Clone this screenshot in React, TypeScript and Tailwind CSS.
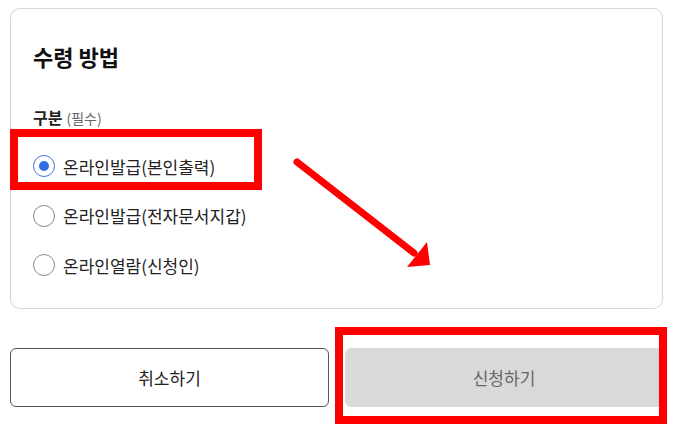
import React from "react";

const font = { fontFamily: '"Noto Sans CJK KR", "Noto Sans", sans-serif' };

function Radio({ checked, label }: { checked?: boolean; label: string }) {
  return (
    <div className="flex items-center h-[26px] gap-[8px]">
      {checked ? (
        <span className="w-[22px] h-[22px] rounded-full border-[1.5px] border-[#3d74db] flex items-center justify-center">
          <span className="w-[10px] h-[10px] rounded-full bg-[#2f6fe0]" />
        </span>
      ) : (
        <span className="w-[22px] h-[22px] rounded-full border-[1.5px] border-[#8a8a8a]" />
      )}
      <span className="text-[17px] text-[#222] leading-none">{label}</span>
    </div>
  );
}

export default function App() {
  return (
    <div className="relative w-[673px] h-[431px] bg-white overflow-hidden" style={font}>
      <div className="pt-[8px] px-[10px]">
        <div className="h-[301px] border border-[#d6d6d6] rounded-[10px] pl-[22px] pt-[32px]">
          <div className="text-[22px] font-bold text-[#111] leading-[30px]">수령 방법</div>
          <div className="mt-[35px] flex items-baseline gap-[4px] leading-[22px]">
            <span className="text-[16px] font-bold text-[#222]">구분</span>
            <span className="text-[14px] text-[#666]">(필수)</span>
          </div>
          <div className="mt-[24px] flex flex-col gap-[23.5px]">
            <Radio checked label="온라인발급(본인출력)" />
            <Radio label="온라인발급(전자문서지갑)" />
            <Radio label="온라인열람(신청인)" />
          </div>
        </div>
      </div>
      <div className="mt-[39px] px-[10px] flex gap-[16px]">
        <button className="w-[319px] h-[59px] rounded-[6px] border border-[#555] bg-white text-[17px] text-[#222]">
          취소하기
        </button>
        <button className="flex-1 h-[59px] rounded-[6px] bg-[#d9d9d9] text-[17px] text-[#666]">
          신청하기
        </button>
      </div>

      {/* annotation overlays */}
      <div className="absolute left-[10px] top-[129px] w-[252px] h-[61px] border-[8px] border-[#ff0000]" />
      <div className="absolute left-[335px] top-[327px] w-[332px] h-[97px] border-[8px] border-[#ff0000]" />
      <svg className="absolute left-0 top-0" width="673" height="431" viewBox="0 0 673 431">
        <line x1="297" y1="162" x2="414" y2="253" stroke="#ff0000" strokeWidth="7" strokeLinecap="round" />
        <polygon points="430,265 407,267 427,242" fill="#ff0000" />
      </svg>
    </div>
  );
}
